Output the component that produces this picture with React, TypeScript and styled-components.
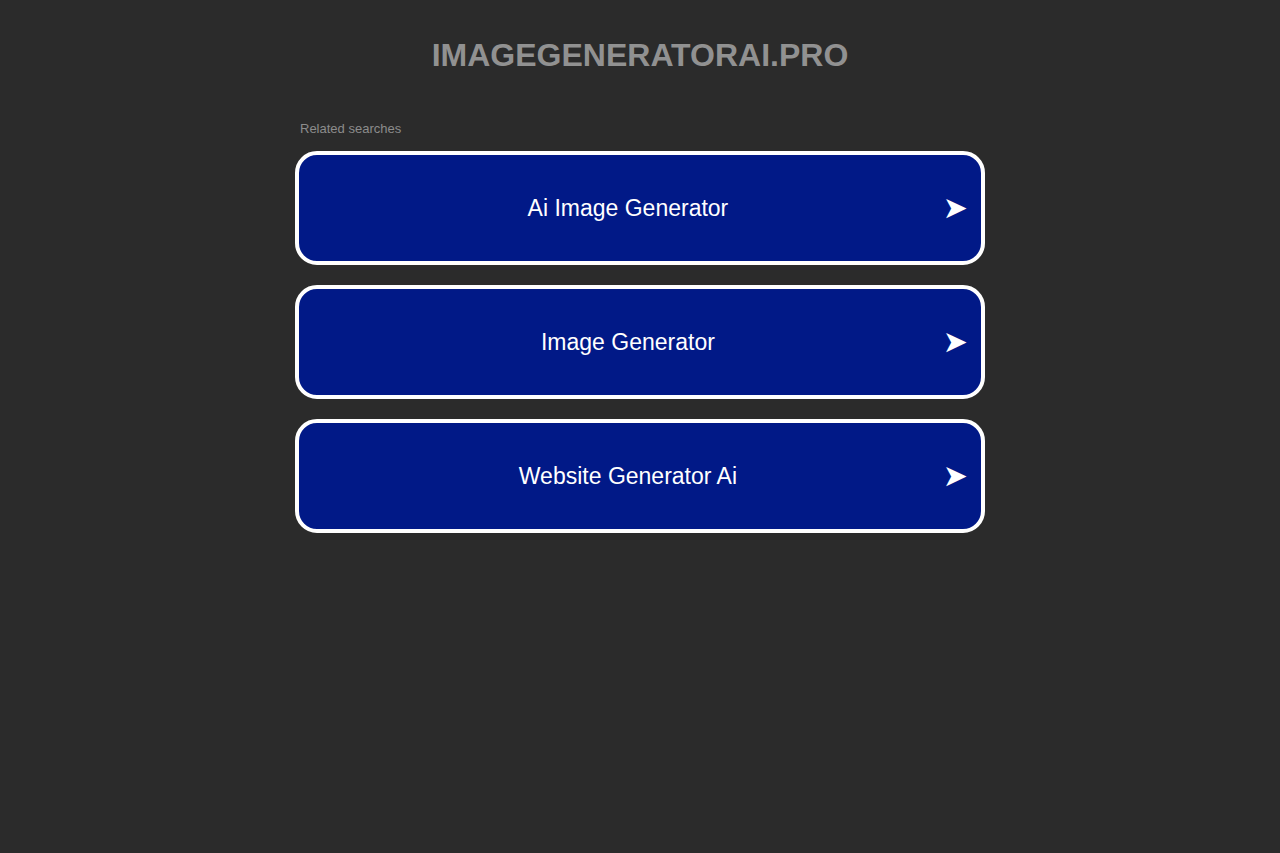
import React from 'react';
import styled, {createGlobalStyle} from "styled-components";

const GlobalStyle = createGlobalStyle`
    html, body {
        margin: 0;
        padding: 0;
        background-color: #2b2b2b;
        font-family: "Liberation Sans", Arial, sans-serif;
    }
`

const searches = ['Ai Image Generator', 'Image Generator', 'Website Generator Ai'];

export default function App() {
    return (
        <Page>
            <GlobalStyle/>
            <Title>IMAGEGENERATORAI.PRO</Title>
            <Related>
                <Label>Related searches</Label>
                <List>
                    {searches.map(s => (
                        <SearchLink key={s} href="#">
                            <LinkText>{s}</LinkText>
                            <Arrow>➤</Arrow>
                        </SearchLink>
                    ))}
                </List>
            </Related>
        </Page>
    );
}

const Page = styled.div`
    min-height: 853px;
    padding-top: 37px;
    box-sizing: border-box;
`

const Title = styled.h1`
    margin: 0;
    text-align: center;
    font-size: 32px;
    line-height: 37px;
    font-weight: bold;
    color: #919191;
`

const Related = styled.div`
    width: 690px;
    margin: 47px auto 0;
`

const Label = styled.div`
    font-size: 13px;
    line-height: 15px;
    color: #8c8c8c;
    padding-left: 5px;
    margin-bottom: 15px;
`

const List = styled.div`
    display: flex;
    flex-direction: column;
    gap: 20px;
`

const SearchLink = styled.a`
    display: flex;
    align-items: center;
    height: 114px;
    box-sizing: border-box;
    border: 4px solid #ffffff;
    border-radius: 22px;
    background-color: #011987;
    text-decoration: none;
    padding: 0 13px 0 14px;
`

const LinkText = styled.span`
    flex: 1;
    text-align: center;
    font-size: 23px;
    color: #ffffff;
`

const Arrow = styled.span`
    font-size: 30px;
    line-height: 30px;
    color: #ffffff;
    font-family: "DejaVu Sans", sans-serif;
`
